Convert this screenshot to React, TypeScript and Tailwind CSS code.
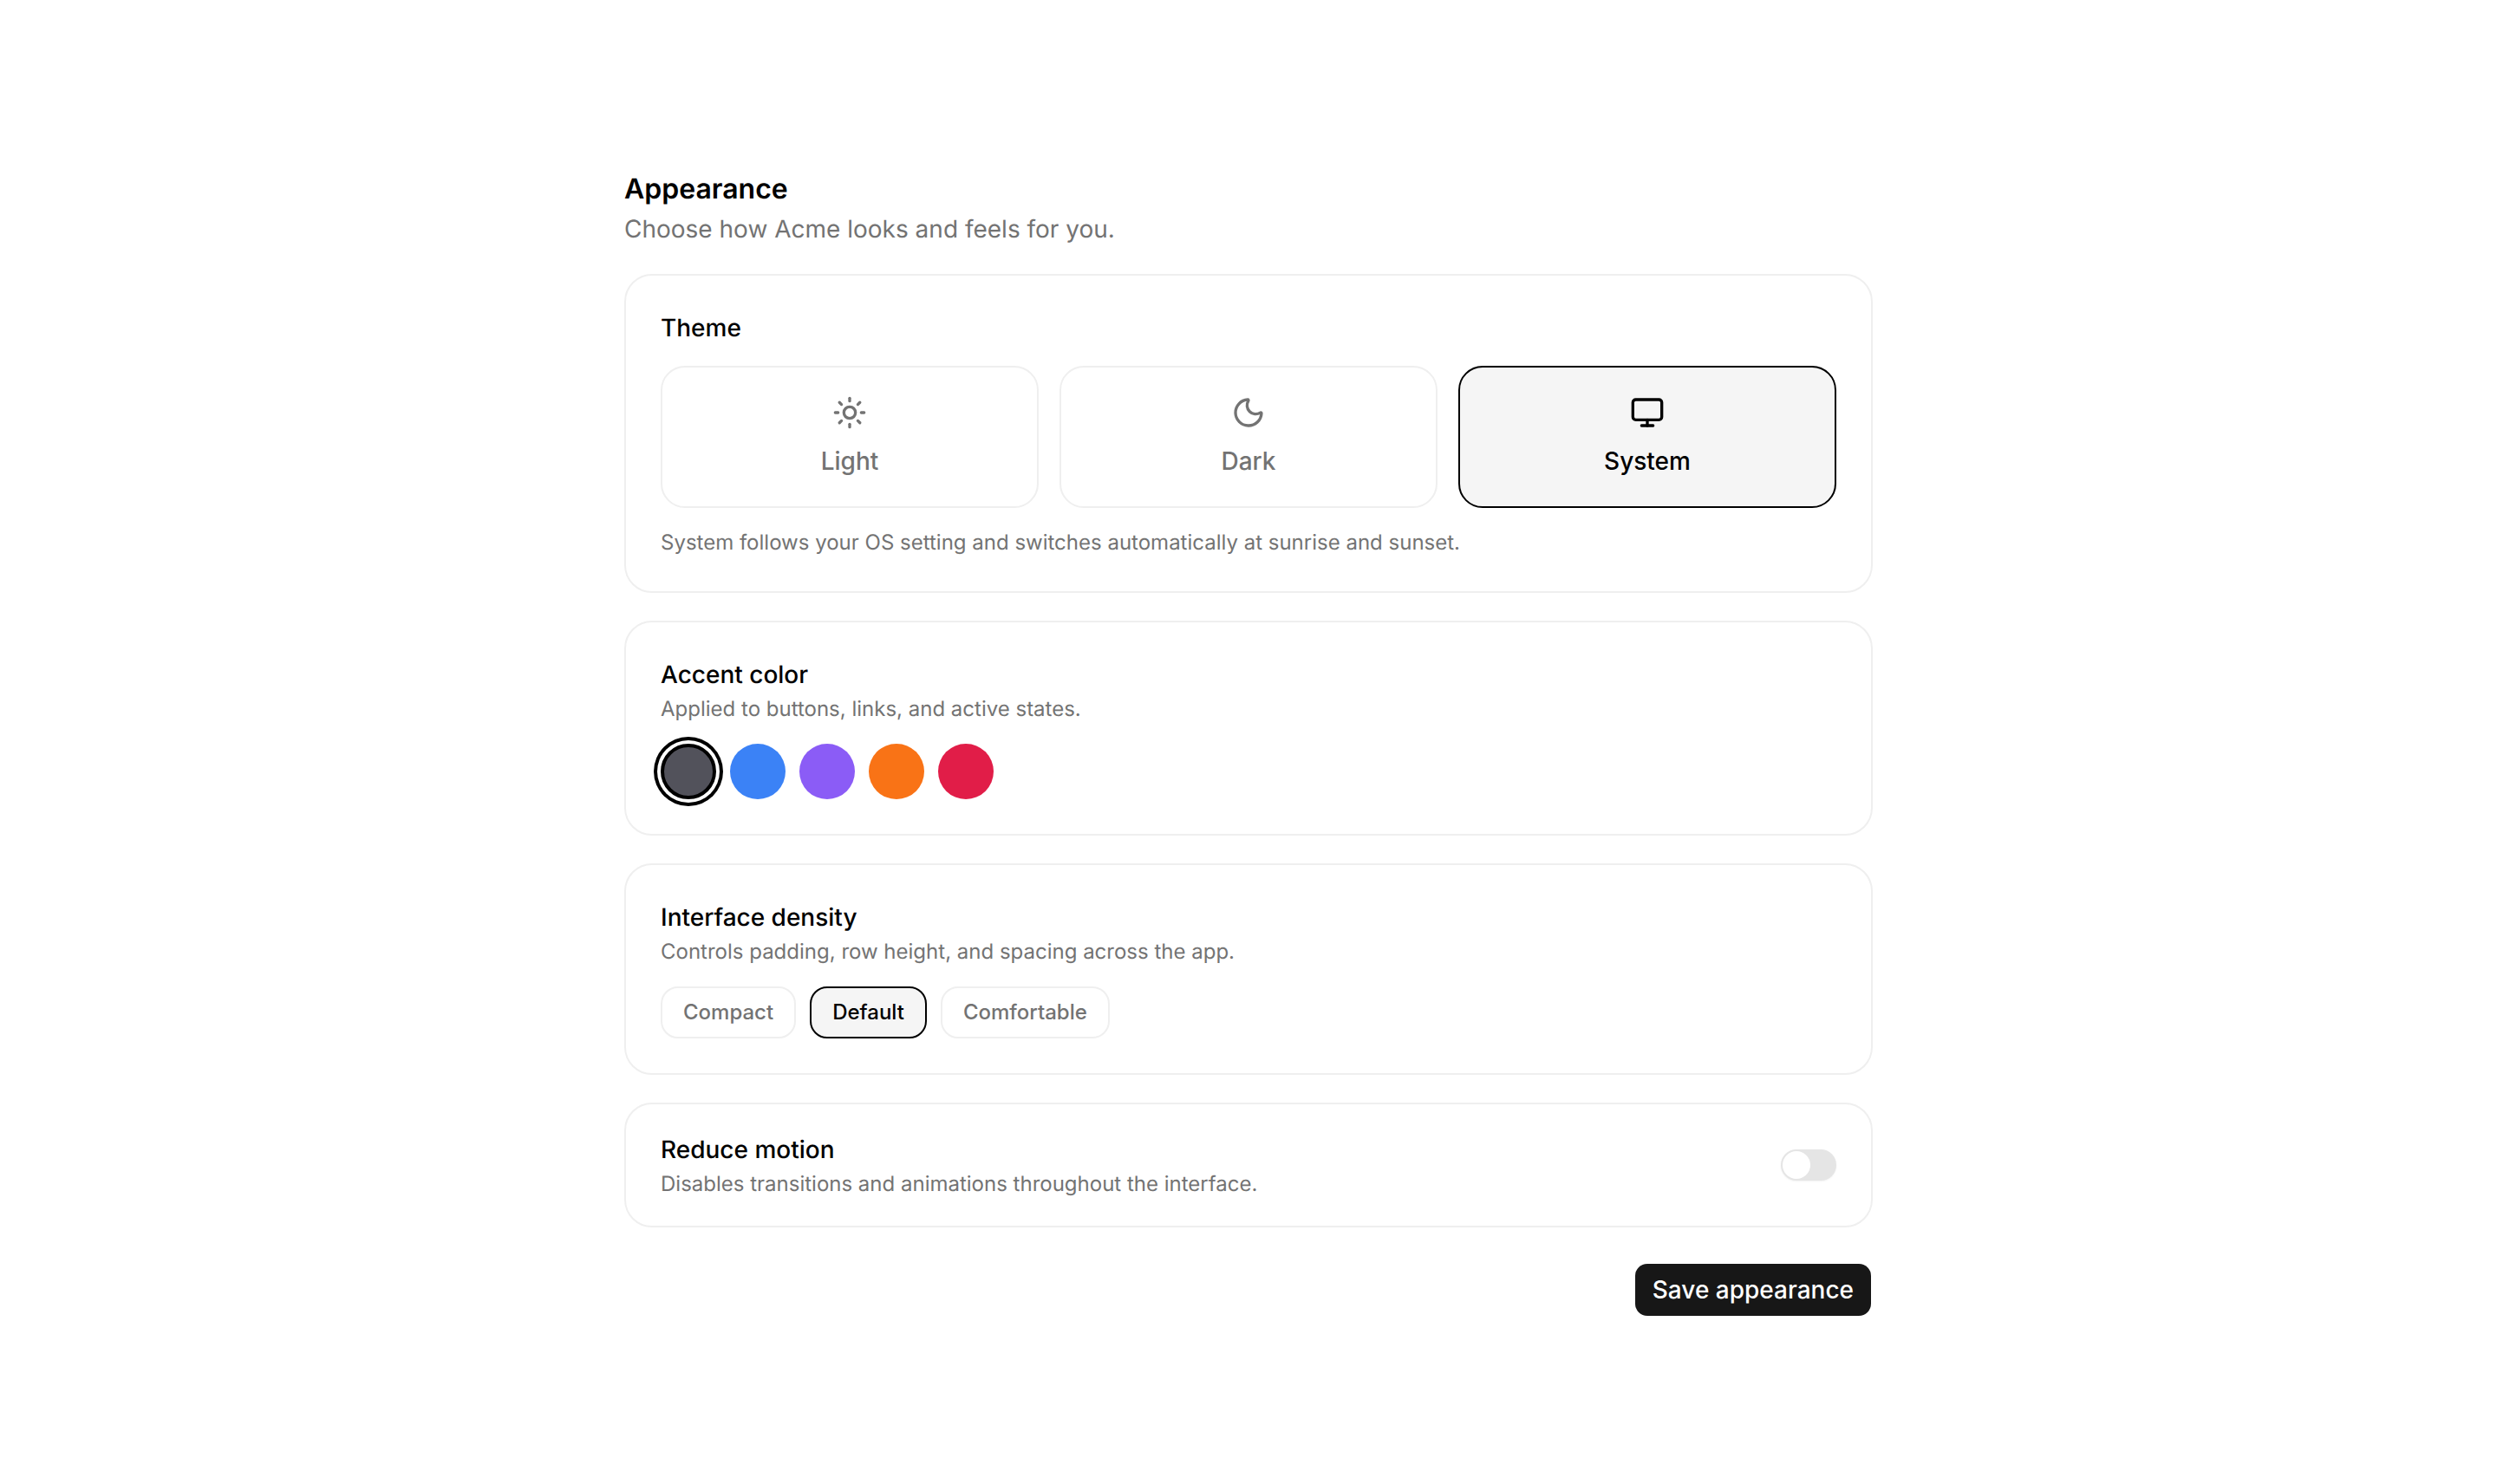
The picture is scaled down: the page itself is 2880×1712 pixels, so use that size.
import React, { useState } from "react";
import { Sun, Moon, Monitor } from "lucide-react";

const themes = [
  { id: "light", label: "Light", icon: Sun },
  { id: "dark", label: "Dark", icon: Moon },
  { id: "system", label: "System", icon: Monitor },
];

const accents = [
  { id: "zinc", className: "bg-[#52525b]" },
  { id: "blue", className: "bg-[#3b82f6]" },
  { id: "violet", className: "bg-[#8b5cf6]" },
  { id: "orange", className: "bg-[#f97316]" },
  { id: "rose", className: "bg-[#e11d48]" },
];

const densities = ["Compact", "Default", "Comfortable"];

const Card = ({ className = "p-[40px]", children }: { className?: string; children: React.ReactNode }) => (
  <section className={`rounded-[32px] border-2 border-[#efefef] bg-white ${className}`}>{children}</section>
);

const Title = ({ children }: { children: React.ReactNode }) => (
  <h3 className="text-[28px] leading-[40px] font-medium text-black">{children}</h3>
);

const Hint = ({ className = "mt-[4px]", children }: { className?: string; children: React.ReactNode }) => (
  <p className={`text-[24px] leading-[32px] text-[#737373] ${className}`}>{children}</p>
);

export default function App() {
  const [theme, setTheme] = useState("system");
  const [accent, setAccent] = useState("zinc");
  const [density, setDensity] = useState("Default");
  const [reduced, setReduced] = useState(false);

  return (
    <div className="min-h-screen bg-white pt-[194px] font-['Inter',sans-serif] [text-rendering:geometricPrecision]">
      <div className="mx-auto flex w-[1440px] flex-col">
        <header className="mb-[32px]">
          <h2 className="text-[32px] leading-[48px] font-semibold text-black">Appearance</h2>
          <p className="mt-[2px] text-[28px] leading-[40px] text-[#737373]">
            Choose how Acme looks and feels for you.
          </p>
        </header>

        <div className="flex flex-col gap-[32px]">
          <Card>
            <Title>Theme</Title>
            <div className="mt-[24px] grid grid-cols-3 gap-[24px]">
              {themes.map((t) => {
                const Icon = t.icon;
                const active = theme === t.id;
                return (
                  <button
                    key={t.id}
                    onClick={() => setTheme(t.id)}
                    className={`flex flex-col items-center gap-[16px] rounded-[28px] border-2 py-[32px] text-[28px] leading-[40px] font-medium ${
                      active
                        ? "border-black bg-[#f5f5f5] text-black"
                        : "border-[#efefef] bg-white text-[#737373]"
                    }`}
                  >
                    <Icon size={40} />
                    {t.label}
                  </button>
                );
              })}
            </div>
            <Hint className="mt-[24px]">
              System follows your OS setting and switches automatically at sunrise and sunset.
            </Hint>
          </Card>

          <Card>
            <Title>Accent color</Title>
            <Hint>Applied to buttons, links, and active states.</Hint>
            <div className="mt-[24px] flex gap-[16px]">
              {accents.map((a) => (
                <button
                  key={a.id}
                  aria-label={a.id}
                  onClick={() => setAccent(a.id)}
                  className={`size-[64px] rounded-full ${a.className} ${
                    accent === a.id
                      ? "border-[4px] border-black ring-[4px] ring-black ring-offset-[4px] ring-offset-white"
                      : ""
                  }`}
                />
              ))}
            </div>
          </Card>

          <Card>
            <Title>Interface density</Title>
            <Hint>Controls padding, row height, and spacing across the app.</Hint>
            <div className="mt-[24px] flex gap-[16px]">
              {densities.map((d) => (
                <button
                  key={d}
                  onClick={() => setDensity(d)}
                  className={`h-[60px] rounded-[20px] border-2 px-[24px] text-[24px] leading-[32px] font-medium ${
                    density === d
                      ? "border-black bg-[#f5f5f5] text-black"
                      : "border-[#efefef] bg-white text-[#737373]"
                  }`}
                >
                  {d}
                </button>
              ))}
            </div>
          </Card>

          <Card className="flex items-center justify-between px-[40px] py-[32px]">
            <div>
              <Title>Reduce motion</Title>
              <Hint>Disables transitions and animations throughout the interface.</Hint>
            </div>
            <button
              aria-label="Reduce motion"
              onClick={() => setReduced(!reduced)}
              className={`flex h-[36px] w-[64px] items-center rounded-full border-[2px] border-transparent shadow-xs ${
                reduced ? "justify-end bg-[#171717]" : "justify-start bg-[#e5e5e5]"
              }`}
            >
              <span className="size-[32px] rounded-full bg-white" />
            </button>
          </Card>
        </div>

        <div className="mt-[42px] flex justify-end pr-[2px]">
          <button className="h-[60px] rounded-[14px] bg-[#171717] px-[20px] text-[28px] leading-[40px] font-medium text-white">
            Save appearance
          </button>
        </div>
      </div>
    </div>
  );
}
